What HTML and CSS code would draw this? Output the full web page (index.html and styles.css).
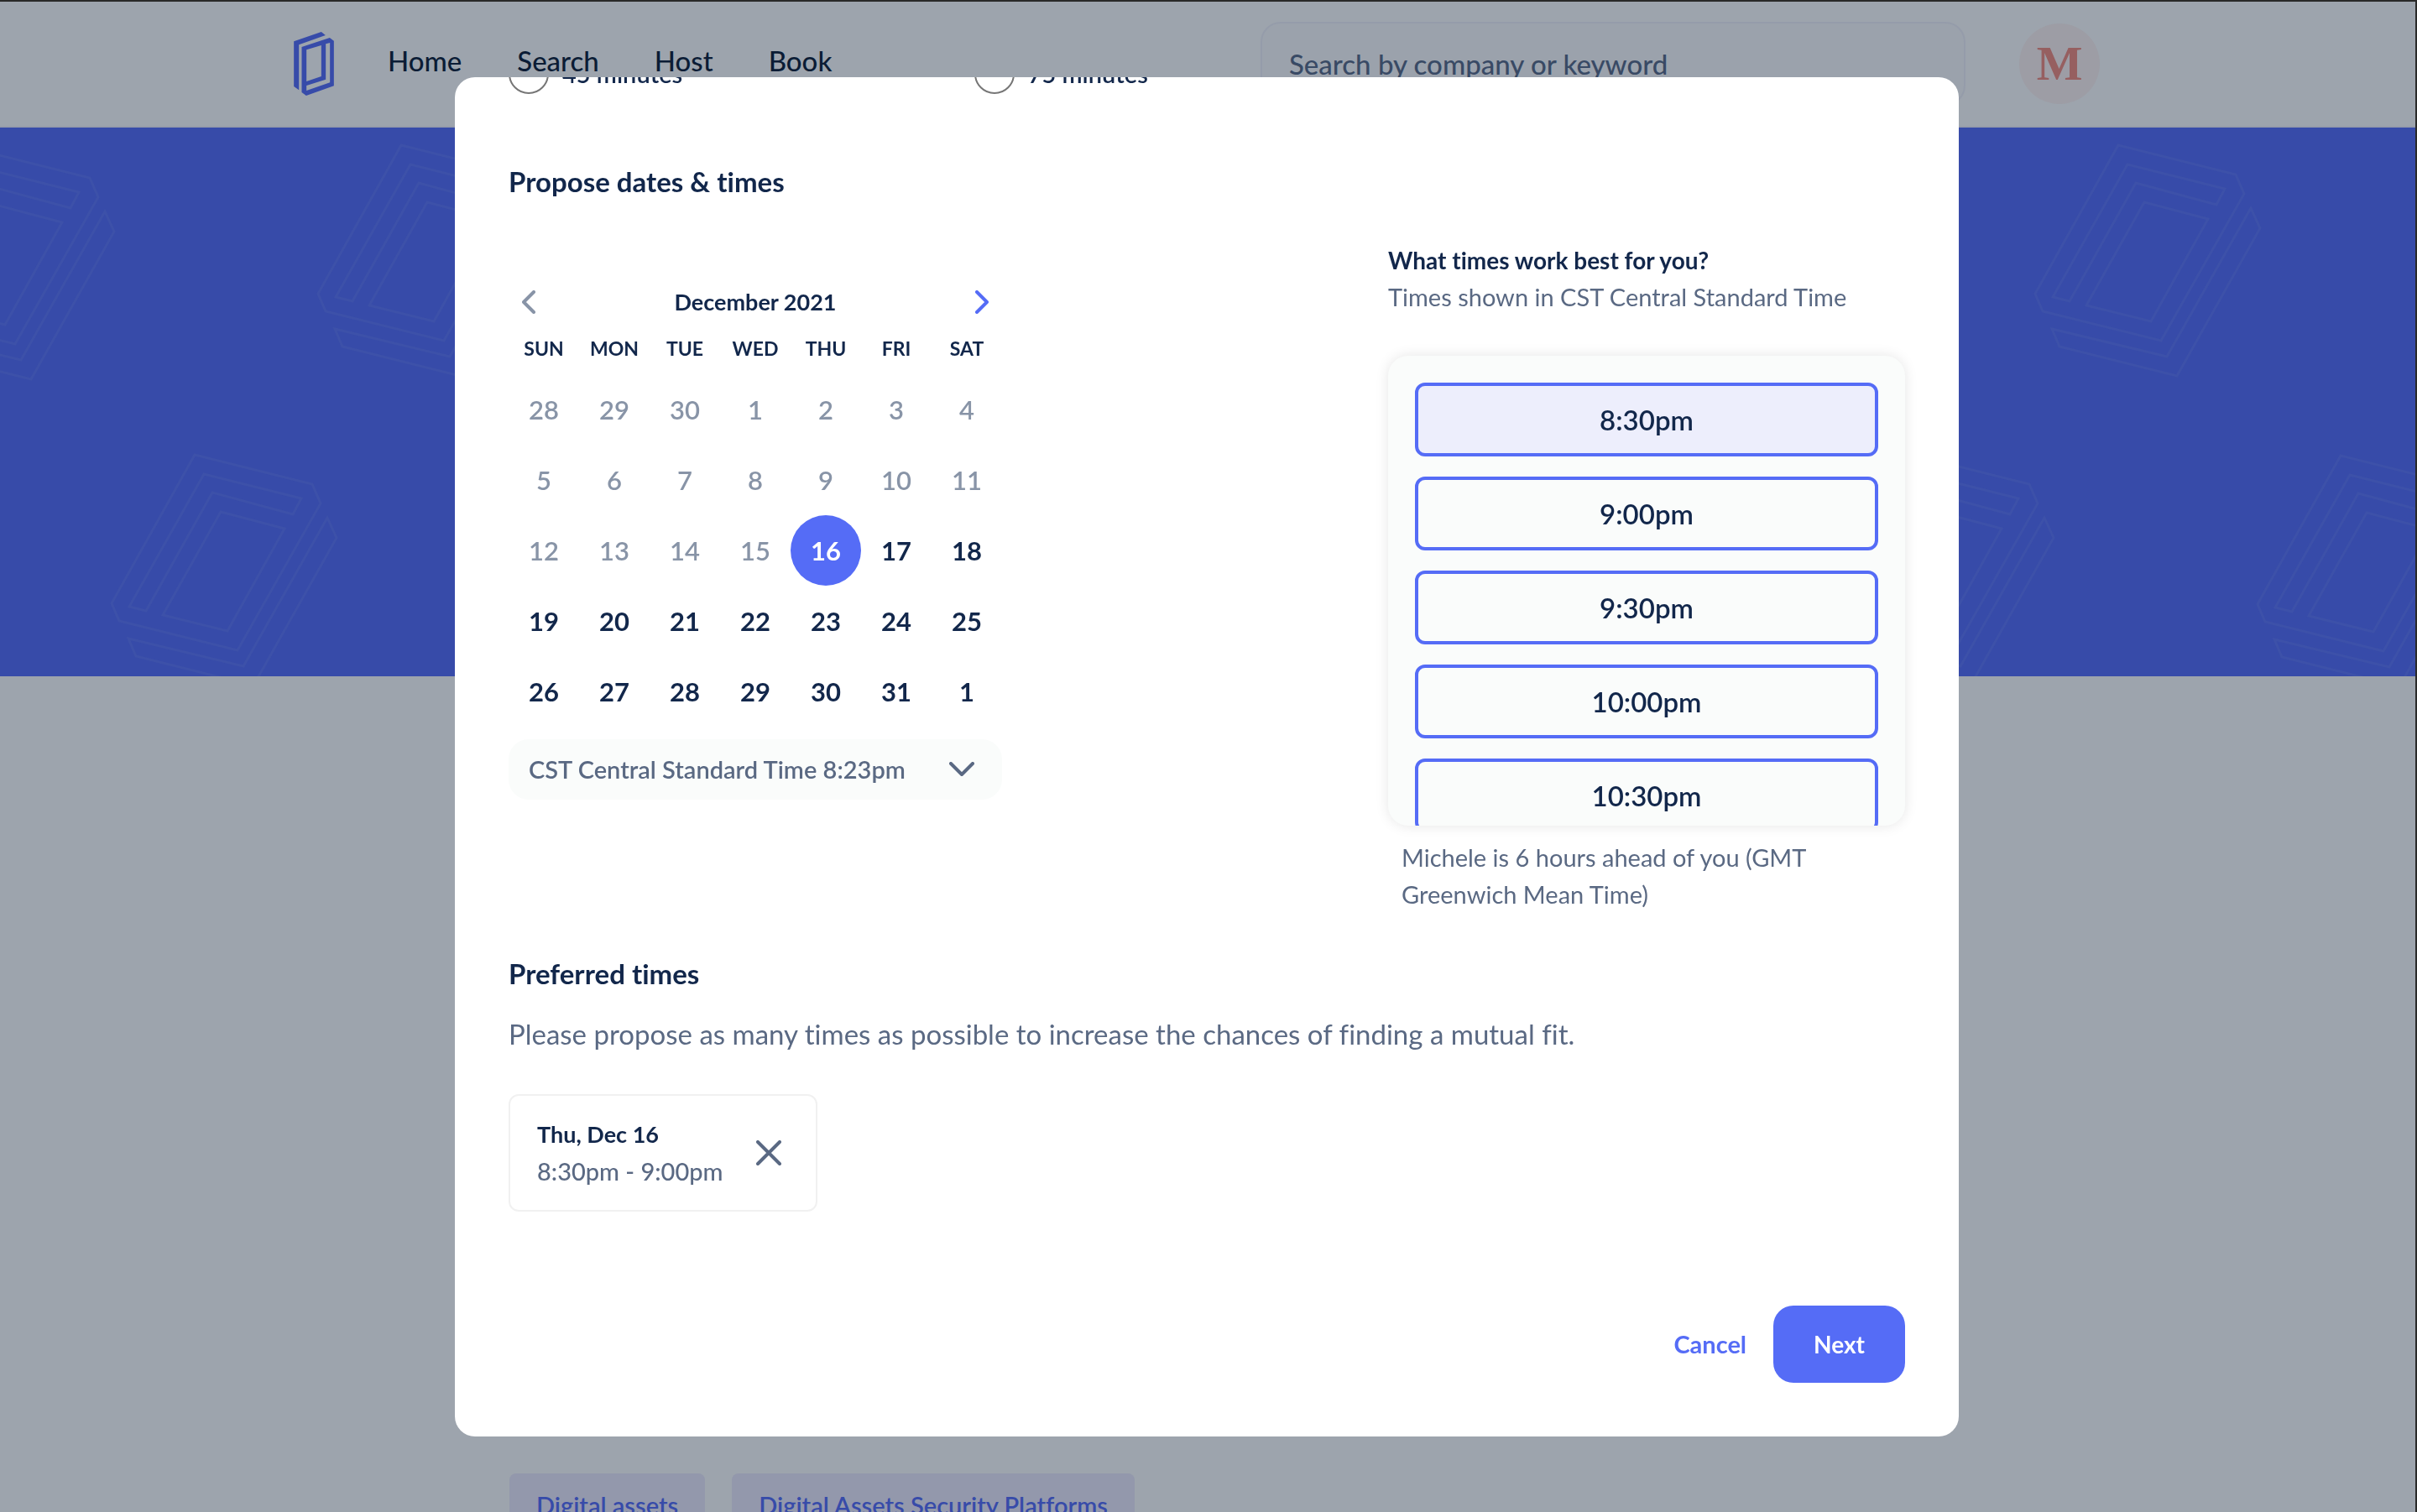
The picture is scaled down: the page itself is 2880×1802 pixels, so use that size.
FILE: index.html
```html
<!DOCTYPE html>
<html lang="en">
<head>
<meta charset="utf-8">
<title>Propose dates &amp; times</title>
<link rel="stylesheet" href="styles.css">
</head>
<body>
<header class="site-header">
  <div class="site-header-inner">
    <a class="logo" href="#" aria-label="Home page">
      <svg viewBox="0 0 143 228" width="48" height="76" aria-hidden="true">
        <path fill="currentColor" d="M0 34 98 0 113 12 18 46V208L0 195Z"/>
        <path fill="currentColor" fill-rule="evenodd" d="M28 54 128 21 143 32V193L44 228 28 216ZM45 64V177L98 159V48ZM114 43V170L45 192V210L129 181V39Z"/>
      </svg>
    </a>
    <nav class="nav">
      <a href="#">Home</a>
      <a href="#">Search</a>
      <a href="#">Host</a>
      <a href="#">Book</a>
    </nav>
    <input class="search" type="search" placeholder="Search by company or keyword" aria-label="Search by company or keyword">
    <a class="avatar" href="#">M</a>
  </div>
</header>

<div class="hero">
  <svg class="hero-art" aria-hidden="true">
    <defs>
      <g id="book">
        <path d="M99 0 239 35 249 58 150 233 9 198 0 177Z"/>
        <path d="M110 23 226 52 216 71 120 45 41 186 21 181Z"/>
        <path d="M130 68 206 88 138 210 61 191Z"/>
        <path d="M257 75 268 99 169 275 29 240 20 219 157 252Z"/>
      </g>
    </defs>
    <use href="#book" x="-132" y="25"/>
    <use href="#book" x="379" y="21"/>
    <use href="#book" x="133" y="390"/>
    <use href="#book" x="2179" y="390"/>
    <use href="#book" x="2425" y="21"/>
    <use href="#book" x="2690" y="391"/>
  </svg>
</div>

<main class="profile">
  <div class="chips">
    <a class="chip" href="#">Digital assets</a>
    <a class="chip" href="#">Digital Assets Security Platforms</a>
  </div>
</main>

<div class="overlay">
  <form class="modal" role="dialog" aria-label="Propose dates and times">
    <div class="durations">
      <label class="radio"><input type="radio" name="duration">45 minutes</label>
      <label class="radio"><input type="radio" name="duration">75 minutes</label>
    </div>

    <h2>Propose dates &amp; times</h2>

    <div class="schedule">
      <section class="calendar">
        <div class="month">
          <button type="button" class="arrow arrow-off" aria-label="Previous month">
            <svg viewBox="0 0 16 28" width="16" height="28"><path d="M14 2 2 14 14 26"/></svg>
          </button>
          <h3>December 2021</h3>
          <button type="button" class="arrow" aria-label="Next month">
            <svg viewBox="0 0 16 28" width="16" height="28"><path d="M2 2 14 14 2 26"/></svg>
          </button>
        </div>
        <table class="days">
          <thead>
            <tr><th>SUN</th><th>MON</th><th>TUE</th><th>WED</th><th>THU</th><th>FRI</th><th>SAT</th></tr>
          </thead>
          <tbody>
            <tr>
              <td><button type="button" disabled>28</button></td><td><button type="button" disabled>29</button></td><td><button type="button" disabled>30</button></td><td><button type="button" disabled>1</button></td><td><button type="button" disabled>2</button></td><td><button type="button" disabled>3</button></td><td><button type="button" disabled>4</button></td>
            </tr>
            <tr>
              <td><button type="button" disabled>5</button></td><td><button type="button" disabled>6</button></td><td><button type="button" disabled>7</button></td><td><button type="button" disabled>8</button></td><td><button type="button" disabled>9</button></td><td><button type="button" disabled>10</button></td><td><button type="button" disabled>11</button></td>
            </tr>
            <tr>
              <td><button type="button" disabled>12</button></td><td><button type="button" disabled>13</button></td><td><button type="button" disabled>14</button></td><td><button type="button" disabled>15</button></td><td><button type="button" class="selected">16</button></td><td><button type="button">17</button></td><td><button type="button">18</button></td>
            </tr>
            <tr>
              <td><button type="button">19</button></td><td><button type="button">20</button></td><td><button type="button">21</button></td><td><button type="button">22</button></td><td><button type="button">23</button></td><td><button type="button">24</button></td><td><button type="button">25</button></td>
            </tr>
            <tr>
              <td><button type="button">26</button></td><td><button type="button">27</button></td><td><button type="button">28</button></td><td><button type="button">29</button></td><td><button type="button">30</button></td><td><button type="button">31</button></td><td><button type="button">1</button></td>
            </tr>
          </tbody>
        </table>
        <div class="zone">
          <select aria-label="Time zone"><option>CST Central Standard Time 8:23pm</option></select>
          <svg viewBox="0 0 30 18" width="30" height="18" aria-hidden="true"><path d="M2 2 15 15 28 2"/></svg>
        </div>
      </section>

      <section class="times">
        <h3>What times work best for you?</h3>
        <p>Times shown in CST Central Standard Time</p>
        <div class="slots">
          <button type="button" class="slot slot-on">8:30pm</button>
          <button type="button" class="slot">9:00pm</button>
          <button type="button" class="slot">9:30pm</button>
          <button type="button" class="slot">10:00pm</button>
          <button type="button" class="slot">10:30pm</button>
        </div>
        <p class="note">Michele is 6 hours ahead of you (GMT Greenwich Mean Time)</p>
      </section>
    </div>

    <h2>Preferred times</h2>
    <p class="hint">Please propose as many times as possible to increase the chances of finding a mutual fit.</p>

    <div class="picked">
      <div>
        <h3>Thu, Dec 16</h3>
        <p>8:30pm - 9:00pm</p>
      </div>
      <button type="button" class="remove" aria-label="Remove time">
        <svg viewBox="0 0 30 30" width="30" height="30"><path d="M2 2 28 28M28 2 2 28"/></svg>
      </button>
    </div>

    <footer class="actions">
      <button type="button" class="cancel">Cancel</button>
      <button type="submit" class="next">Next</button>
    </footer>
  </form>
</div>
</body>
</html>
```
FILE: styles.css
```css
:root {
  --navy: #12274b;
  --slate: #5a6983;
  --blue: #556cf6;
  --frame: #292929;
}

* {
  box-sizing: border-box;
  margin: 0;
}

html,
body {
  height: 100%;
}

body {
  overflow: hidden;
  border-top: 2px solid var(--frame);
  border-right: 2px solid var(--frame);
  background: #9da4ad;
  color: var(--navy);
  font: 400 29px/44px Lato, sans-serif;
  font-variant-ligatures: none;
}

a {
  color: inherit;
  text-decoration: none;
}

button,
input,
select {
  padding: 0;
  border: 0;
  background: none;
  color: inherit;
  font: inherit;
}

svg {
  display: block;
}

/* Page behind the dialog */

.site-header {
  padding-right: 26px;
  border-bottom: 2px solid #979daa;
}

.site-header-inner {
  display: flex;
  align-items: center;
  gap: 64px;
  max-width: 2152px;
  height: 148px;
  margin: 0 auto;
}

.logo {
  color: #374ba9;
}

.nav {
  display: flex;
  flex: 1;
  gap: 66px;
  padding-bottom: 8px;
  color: #0b1c35;
  font-size: 33px;
  font-weight: 500;
}

.search {
  width: 840px;
  height: 100px;
  padding: 0 32px;
  border: 2px solid #959caa;
  border-radius: 24px;
  background: #9ba2ac;
  color: #394a65;
  font-size: 33px;
  font-weight: 500;
}

.search::placeholder {
  color: #394a65;
  opacity: 1;
}

.avatar {
  width: 96px;
  border-radius: 50%;
  background: #9d9da5;
  color: #965f60;
  font: 700 58px/96px "Liberation Serif", serif;
  text-align: center;
}

.hero {
  height: 654px;
  background: #374ba9;
}

.hero-art {
  width: 100%;
  height: 100%;
  fill: none;
  stroke: #3d51a9;
  stroke-width: 3;
}

.profile {
  max-width: 1664px;
  margin: 0 auto;
  padding-top: 950px;
}

.chips {
  display: flex;
  gap: 32px;
}

.chip {
  padding: 16px 32px;
  border-radius: 8px;
  background: #9398ac;
  color: #374ba9;
  font-weight: 600;
  white-space: nowrap;
}

/* Dialog */

.overlay {
  position: fixed;
  inset: 2px 4px 0 0;
  display: flex;
  justify-content: center;
  padding: 90px 24px;
}

.modal {
  display: flex;
  flex-direction: column;
  width: 100%;
  max-width: 1792px;
  padding: 0 64px 64px;
  overflow: hidden;
  border-radius: 24px;
  background: #fff;
}

.durations {
  display: grid;
  grid-template-columns: repeat(3, 1fr);
  flex: none;
  margin: -28px 0 80px;
}

.radio {
  display: flex;
  align-items: center;
  gap: 16px;
  font-weight: 600;
}

.radio input {
  appearance: none;
  width: 48px;
  height: 48px;
  border: 2px solid #767676;
  border-radius: 50%;
}

h2 {
  font-size: 33px;
  font-weight: 700;
  line-height: 48px;
}

h3 {
  font-size: 28px;
  font-weight: 700;
  line-height: 44px;
}

.schedule {
  display: flex;
  justify-content: space-between;
  margin: 48px 0;
}

.calendar {
  width: 588px;
  padding-top: 48px;
}

.month {
  display: flex;
  align-items: center;
  justify-content: space-between;
  height: 48px;
  padding: 0 16px;
}

.month h3,
.picked h3 {
  font-size: 27px;
}

.arrow {
  color: var(--blue);
}

.arrow-off {
  color: #8894a7;
}

.arrow svg,
.zone svg,
.remove svg {
  fill: none;
  stroke: currentColor;
  stroke-width: 4;
  stroke-linecap: round;
  stroke-linejoin: round;
}

.days {
  width: 100%;
  border-collapse: collapse;
  table-layout: fixed;
}

.days th {
  height: 62px;
  padding: 0;
  font-size: 23px;
  font-weight: 700;
}

.days td {
  padding: 0;
}

.days button {
  display: block;
  width: 84px;
  height: 84px;
  border-radius: 50%;
  font-size: 31px;
  font-weight: 700;
}

.days button:disabled {
  color: #8894a7;
  font-weight: 600;
}

.days .selected {
  background: var(--blue);
  color: #fff;
}

.zone {
  display: grid;
  align-items: center;
  margin-top: 15px;
  color: var(--slate);
}

.zone select,
.zone svg {
  grid-area: 1 / 1;
}

.zone select {
  appearance: none;
  height: 72px;
  padding: 0 24px;
  border-radius: 24px;
  background: #fafcfb;
  font-weight: 600;
}

.zone svg {
  justify-self: end;
  margin-right: 33px;
  pointer-events: none;
}

.times {
  width: 616px;
}

.times p,
.picked p {
  color: var(--slate);
}

.picked p {
  font-weight: 500;
}

.slots {
  display: flex;
  flex-direction: column;
  gap: 24px;
  height: 560px;
  margin: 48px 0 16px;
  padding: 32px;
  overflow: hidden;
  border-radius: 24px;
  background: #fafcfb;
  box-shadow: 0 0 16px rgba(0, 0, 0, 0.1);
}

.slot {
  flex: none;
  height: 88px;
  border: 4px solid var(--blue);
  border-radius: 12px;
  font-size: 33px;
  font-weight: 600;
}

.slot-on {
  background: #edeefc;
}

.times .note {
  padding: 0 16px;
}

.hint {
  margin: 24px 0 48px;
  color: var(--slate);
  font-size: 33px;
  line-height: 48px;
}

.picked {
  display: flex;
  align-items: center;
  justify-content: space-between;
  width: 368px;
  padding: 24px 41px 24px 32px;
  border: 2px solid #f1f1f1;
  border-radius: 12px;
}

.remove {
  color: var(--slate);
}

.actions {
  display: flex;
  justify-content: flex-end;
  gap: 32px;
  margin-top: auto;
}

.cancel {
  color: var(--blue);
  font-weight: 700;
}

.next {
  height: 92px;
  padding: 0 48px;
  border-radius: 24px;
  background: var(--blue);
  color: #fff;
  font-size: 28px;
  font-weight: 700;
}
```
